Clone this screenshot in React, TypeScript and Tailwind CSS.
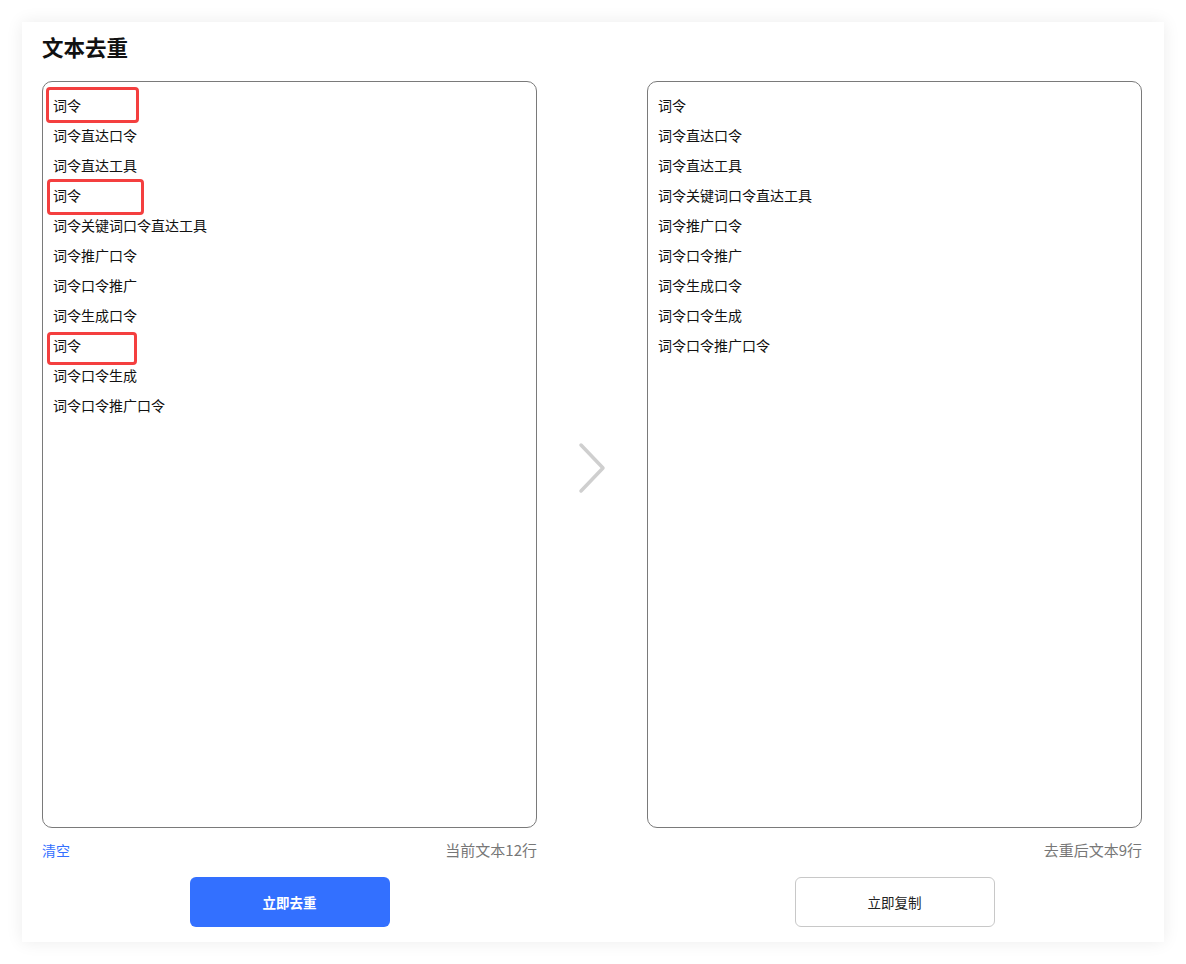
import React from 'react';

const inputLines = [
  '词令',
  '词令直达口令',
  '词令直达工具',
  '词令',
  '词令关键词口令直达工具',
  '词令推广口令',
  '词令口令推广',
  '词令生成口令',
  '词令',
  '词令口令生成',
  '词令口令推广口令',
];

const outputLines = Array.from(new Set(inputLines));

// annotation boxes marking the duplicated rows
const marks = [
  { top: 5, left: 3, width: 93, height: 36 },
  { top: 97, left: 4, width: 97, height: 36 },
  { top: 250, left: 4, width: 90, height: 33 },
];

function TextPanel({ lines, children }: { lines: string[]; children?: React.ReactNode }) {
  return (
    <div className="relative h-[747px] rounded-[10px] border border-[#7a7a7a] bg-white pt-[8px] pl-[10px]">
      {lines.map((line, i) => (
        <div key={i} className="text-[14px] leading-[30px] text-[#111]">
          {line}
        </div>
      ))}
      {children}
    </div>
  );
}

export default function App() {
  return (
    <div
      className="min-h-[964px] bg-white pt-[22px] pl-[22px]"
      style={{ fontFamily: '"Noto Sans CJK SC", "Noto Sans", sans-serif' }}
    >
      <div className="w-[1142px] bg-white pt-[11px] pl-[20px] pb-[15px] shadow-[0_0_16px_rgba(0,0,0,0.08)]">
        <h1 className="text-[21.5px] font-bold leading-[28px] text-[#111]">文本去重</h1>

        <div className="mt-[20px] grid grid-cols-[495px_110px_495px]">
          {/* left column */}
          <div className="flex flex-col">
            <TextPanel lines={inputLines}>
              {marks.map((m, i) => (
                <div
                  key={i}
                  className="absolute rounded-[4px] border-[3px] border-[#f43f3f]"
                  style={{ top: m.top, left: m.left, width: m.width, height: m.height }}
                />
              ))}
            </TextPanel>
            <div className="mt-[12px] flex items-center justify-between leading-[20px]">
              <span className="text-[14px] text-[#3370ff]">清空</span>
              <span className="text-[15px] text-[#777]">当前文本12行</span>
            </div>
            <div className="mt-[17px] flex justify-center">
              <button className="h-[50px] w-[200px] rounded-[6px] bg-[#3370ff] text-[13.5px] font-bold text-white">
                立即去重
              </button>
            </div>
          </div>

          {/* arrow */}
          <div className="flex h-[747px] items-center justify-center pt-[26px]">
            <svg width="30" height="52" viewBox="0 0 30 52" fill="none">
              <path
                d="M4 3 L26 26 L4 49"
                stroke="#cfcfcf"
                strokeWidth="3.5"
                strokeLinecap="round"
                strokeLinejoin="round"
              />
            </svg>
          </div>

          {/* right column */}
          <div className="flex flex-col">
            <TextPanel lines={outputLines} />
            <div className="mt-[12px] flex items-center justify-end leading-[20px]">
              <span className="text-[15px] text-[#777]">去重后文本9行</span>
            </div>
            <div className="mt-[17px] flex justify-center">
              <button className="h-[50px] w-[200px] rounded-[6px] border border-[#c8c8c8] bg-white text-[13.5px] text-[#222]">
                立即复制
              </button>
            </div>
          </div>
        </div>
      </div>
    </div>
  );
}
